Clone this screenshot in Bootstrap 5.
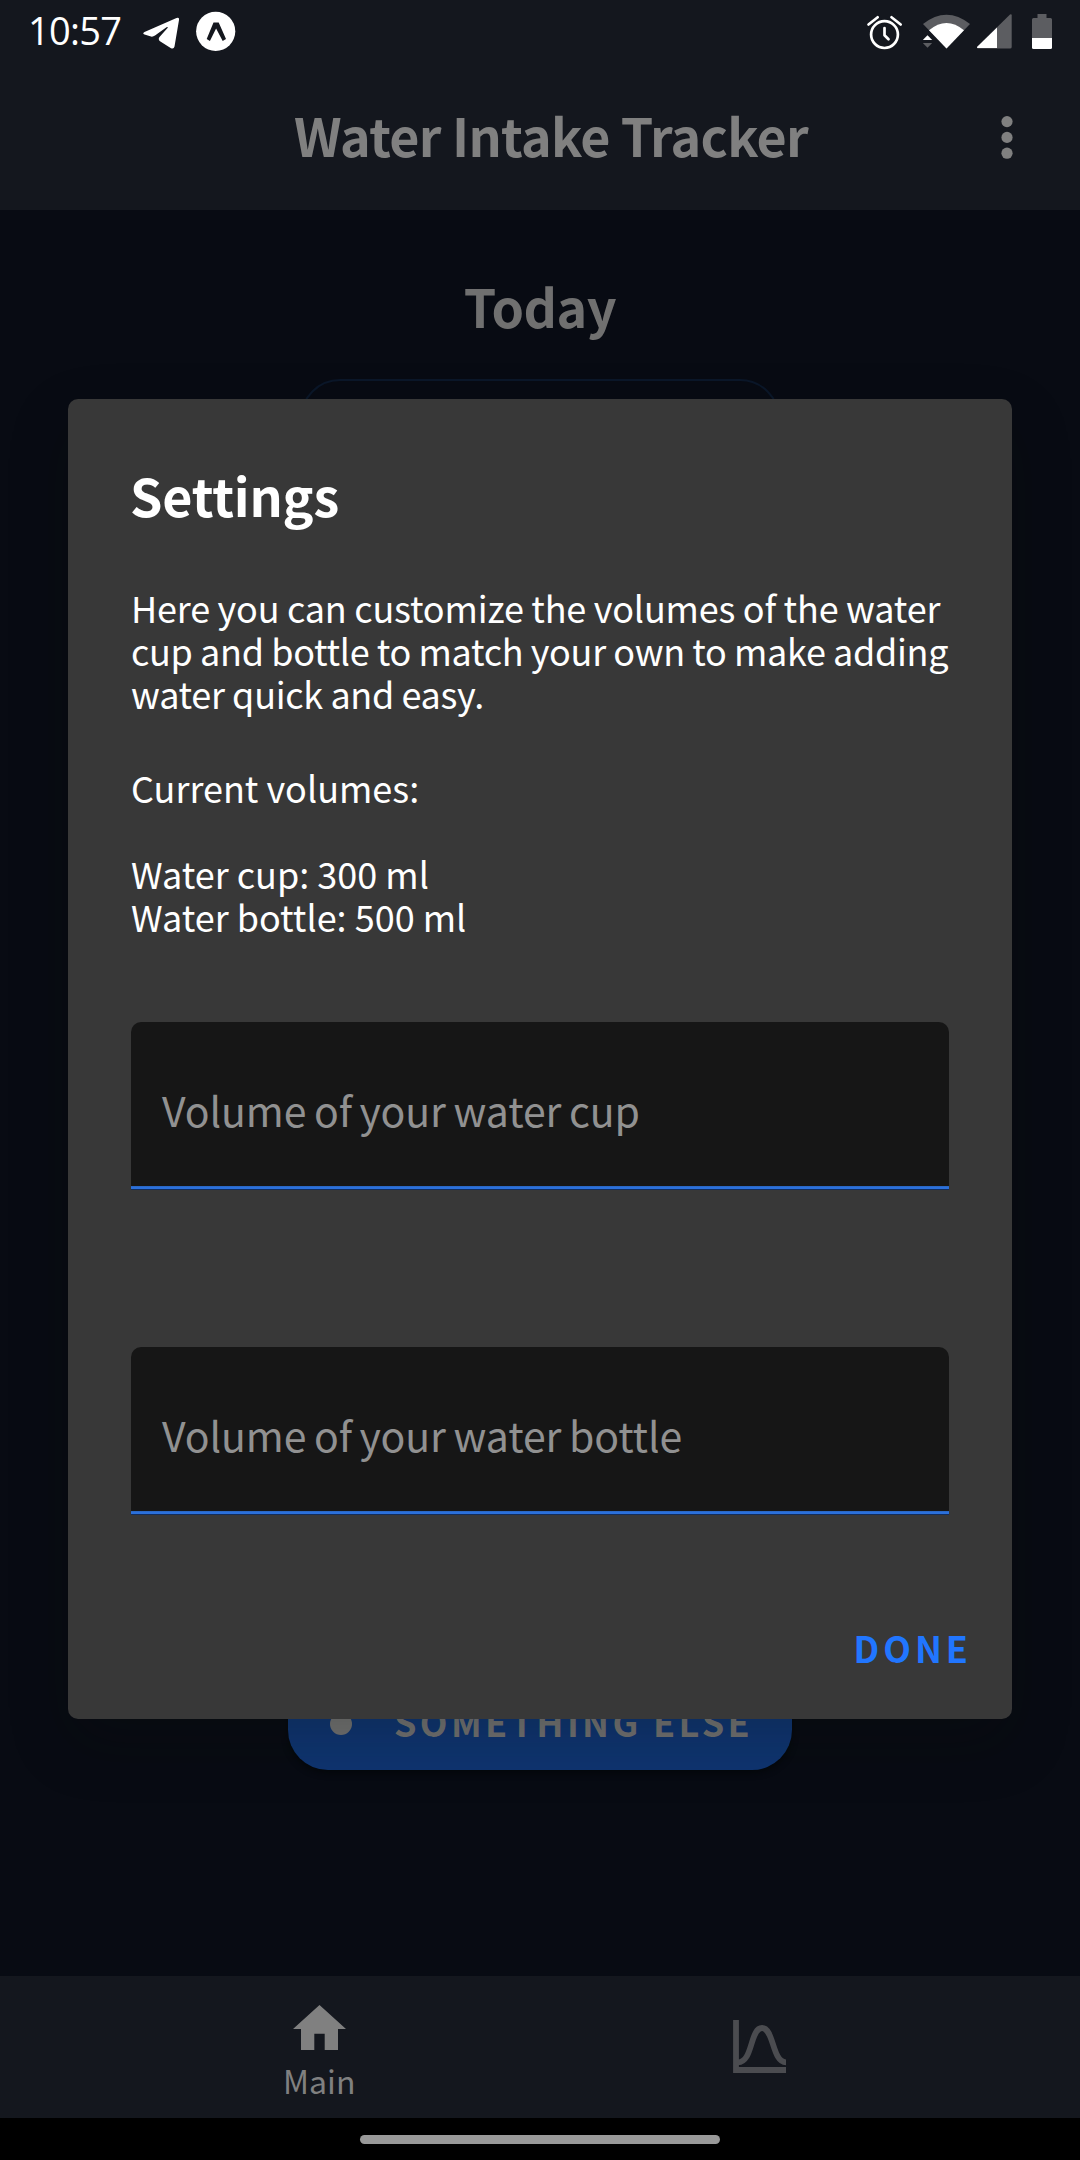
<!DOCTYPE html>
<html lang="en">
<head>
<meta charset="utf-8">
<meta name="viewport" content="width=device-width, initial-scale=1">
<title>Water Intake Tracker</title>
<link href="https://cdn.jsdelivr.net/npm/bootstrap@5.3.0/dist/css/bootstrap.min.css" rel="stylesheet">
<style>
body{background:#080b13;font-family:"Noto Sans CJK SC","Noto Sans",sans-serif;}
.screen{width:1080px;height:2160px;}
.bars{background:#14171e;}
.statusbar{height:62px;color:#fff;padding:0 27px 0 28px;}
.statusbar svg{height:62px;display:block;flex:none}
.clock{font:400 38px/60px "Open Sans",sans-serif;letter-spacing:-.7px;width:115px}
.icon-expo{margin-left:16px}
.icon-wifi{margin-left:19px}
.icon-signal{margin-left:5px}
.icon-battery{margin-left:18px}
.appbar{height:148px;padding:43px 67px 0 294px;color:#808080;}
.app-title{font-size:52px;line-height:60px;letter-spacing:-.7px;white-space:nowrap;}
.more{margin-top:11px}
.day-title{font-size:52px;line-height:60px;letter-spacing:-.5px;color:#707070;margin:66px 0 0}
.summary{width:480px;height:700px;border:2px solid #0b1729;border-radius:40px;margin-top:43px;}
.btn-else,.btn-else:hover{width:504px;height:99px;border-radius:40px;background:#0f3572;color:#737373;font-size:36px;line-height:44px;letter-spacing:3.35px;border:0;margin-top:592px;padding:0 0 0 42px;gap:42px;white-space:nowrap;box-shadow:0 3px 6px #05080b}
.dot{width:22px;height:22px;background:#737373;margin-top:7px}
.tabs{height:142px;color:#808080;padding:0 100px 0 99px}
.tab-label{font-size:32px;line-height:36px;margin-top:12px}
.tab-home{padding-top:29px}
.tab-chart{padding-top:44px;color:#4b4c50}
.gesture{height:42px;background:#000;padding-top:17px}
.pill{width:360px;height:9px;border-radius:5px;background:#999;}
.dialog{left:68px;top:399px;width:944px;height:1320px;background:#383838;border-radius:10px;color:#fff;box-shadow:0 24px 60px 0 rgba(8,12,10,.22);padding:66px 63px 0}
.dlg-title{font-size:52px;line-height:60px;letter-spacing:-.2px;margin:0 0 61px -1px}
.copy{font-size:36px;line-height:43px;letter-spacing:-.3px;word-spacing:-.3px;white-space:nowrap;margin:0 0 51px}
.copy-first{letter-spacing:-.17px}
.volumes{letter-spacing:0;word-spacing:0;margin-bottom:84px}
.field{height:168px;border-radius:10px 10px 0 0;background:linear-gradient(#161616 164px,#2a5fae 164px,#2b70db 165px,#2b70db 167px,#122d5c 167px);color:#919191;font-size:41px;line-height:50px;letter-spacing:-.1px;word-spacing:-1.5px;padding:62px 31px 0;white-space:nowrap}
.field + .field{margin-top:157px}
.btn-done,.btn-done:hover{font-size:36px;line-height:44px;color:#2176ff;letter-spacing:4px;border:0;padding:0;margin:110px -23px 0 0}
</style>
</head>
<body>
<div class="screen d-flex flex-column position-relative overflow-hidden">
  <header class="bars">
    <div class="statusbar d-flex">
      <span class="clock">10:57</span>
      <svg width="37" viewBox="143 0 37 62"><path d="M144.500 32 Q142 33.500 144.500 34.600 L151 36.600 Q153 37 155 35.600 L166.500 27.200 Q168.500 26.500 167.500 28 L159.500 37 Q157.800 39.500 160 41.300 L171 48.200 Q173.800 49.500 174.500 46.500 L179 20 Q179.500 17.200 176.500 18 Z" fill="#fff"/></svg>
      <svg class="icon-expo" width="40" viewBox="196 0 40 62"><circle cx="215.700" cy="31.300" r="19.600" fill="#fff"/><path d="M213.500 22.500h5.200l7.300 16.500-3.300 2-6.600-12.500-6.200 12.500-3.200-2z" fill="#14171e"/></svg>
      <svg class="ms-auto" width="37" viewBox="866 0 37 62" fill="none" stroke="#fff" stroke-width="2.700" stroke-linecap="round"><circle cx="884.500" cy="34.600" r="13.400"/><path d="M868.500 24.500l9.200-7.200M891.500 17.300l9.200 7.200"/><path d="M884.500 28v7.300l4 4" stroke-linejoin="round"/></svg>
      <svg class="icon-wifi" width="49" viewBox="922 0 49 62"><path d="M923 24Q946.500 5.500 970 24L946.500 48.500Z" fill="#5c5d61"/><path d="M922.500 24.500L928.500 30.500L941 43L936 49H922Z" fill="#14171e"/><path d="M929 30.300Q946.500 15.700 964 30.300L946.500 48.500Z" fill="#fff"/><path d="M927.500 35.300l4.700 4.700h-9.400z" fill="#fff"/><path d="M927.500 47.700l4.700-4.700h-9.400z" fill="#5c5d61"/></svg>
      <svg class="icon-signal" width="37" viewBox="976 0 37 62"><path d="M977 47L1010 14.500Q1011.700 13.500 1011.700 15.500V47Q1011.700 48.500 1010 48.500H978Q976.500 48 977 47Z" fill="#5c5d61"/><path d="M977 47L997 27.500V48H978Q976.500 48 977 47Z" fill="#fff"/></svg>
      <svg class="icon-battery" width="22" viewBox="1031 0 22 62"><path d="M1037.500 14h9v4h4q1.500 0 1.500 1.500V38h-20V19.500q0-1.500 1.500-1.500h4z" fill="#5c5d61"/><path d="M1032 38h20v9.500q0 1.500-1.500 1.500h-17q-1.500 0-1.500-1.500z" fill="#fff"/></svg>
    </div>
    <div class="appbar d-flex justify-content-between">
      <h1 class="app-title fw-bold m-0">Water Intake Tracker</h1>
      <svg class="more" width="12" height="44" viewBox="0 0 12 44" fill="currentColor"><circle cx="6" cy="5.600" r="5.600"/><circle cx="6" cy="21.400" r="5.600"/><circle cx="6" cy="37.200" r="5.600"/></svg>
    </div>
  </header>
  <main class="flex-grow-1 d-flex flex-column align-items-center">
    <h2 class="day-title fw-bold flex-shrink-0">Today</h2>
    <div class="summary flex-shrink-0"></div>
    <button type="button" class="btn btn-else fw-bold d-flex align-items-center flex-shrink-0"><span class="dot rounded-circle"></span><span>SOMETHING ELSE</span></button>
  </main>
  <nav class="tabs bars row g-0">
    <div class="tab-home col-6 d-flex flex-column align-items-center">
      <svg width="53" height="45" viewBox="0 0 53 45"><path d="M26.500 0L53 24H45V45H31.700V28.700H21.300V45H8V24H0Z" fill="currentColor"/></svg>
      <span class="tab-label">Main</span>
    </div>
    <div class="tab-chart col-6 d-flex flex-column align-items-center">
      <svg width="53" height="53" viewBox="0 0 53 53" fill="none" stroke="currentColor" stroke-width="5.800"><path d="M3 0V50H53"/><path d="M5 42.300C20 42.300 17 8 29 8S39 42.300 53 42.300"/></svg>
    </div>
  </nav>
  <div class="gesture d-flex justify-content-center"><div class="pill"></div></div>

  <div class="dialog position-absolute d-flex flex-column" role="dialog">
    <h2 class="dlg-title fw-bold">Settings</h2>
    <p class="copy"><span class="copy-first">Here you can customize the volumes of the water</span><br>cup and bottle to match your own to make adding<br>water quick and easy.</p>
    <p class="copy volumes">Current volumes:<br><br>Water cup: 300 ml<br>Water bottle: 500 ml</p>
    <div class="field">Volume of your water cup</div>
    <div class="field">Volume of your water bottle</div>
    <button type="button" class="btn btn-done fw-bold align-self-end">DONE</button>
  </div>
</div>
<script src="https://cdn.jsdelivr.net/npm/bootstrap@5.3.0/dist/js/bootstrap.bundle.min.js"></script>
</body>
</html>
